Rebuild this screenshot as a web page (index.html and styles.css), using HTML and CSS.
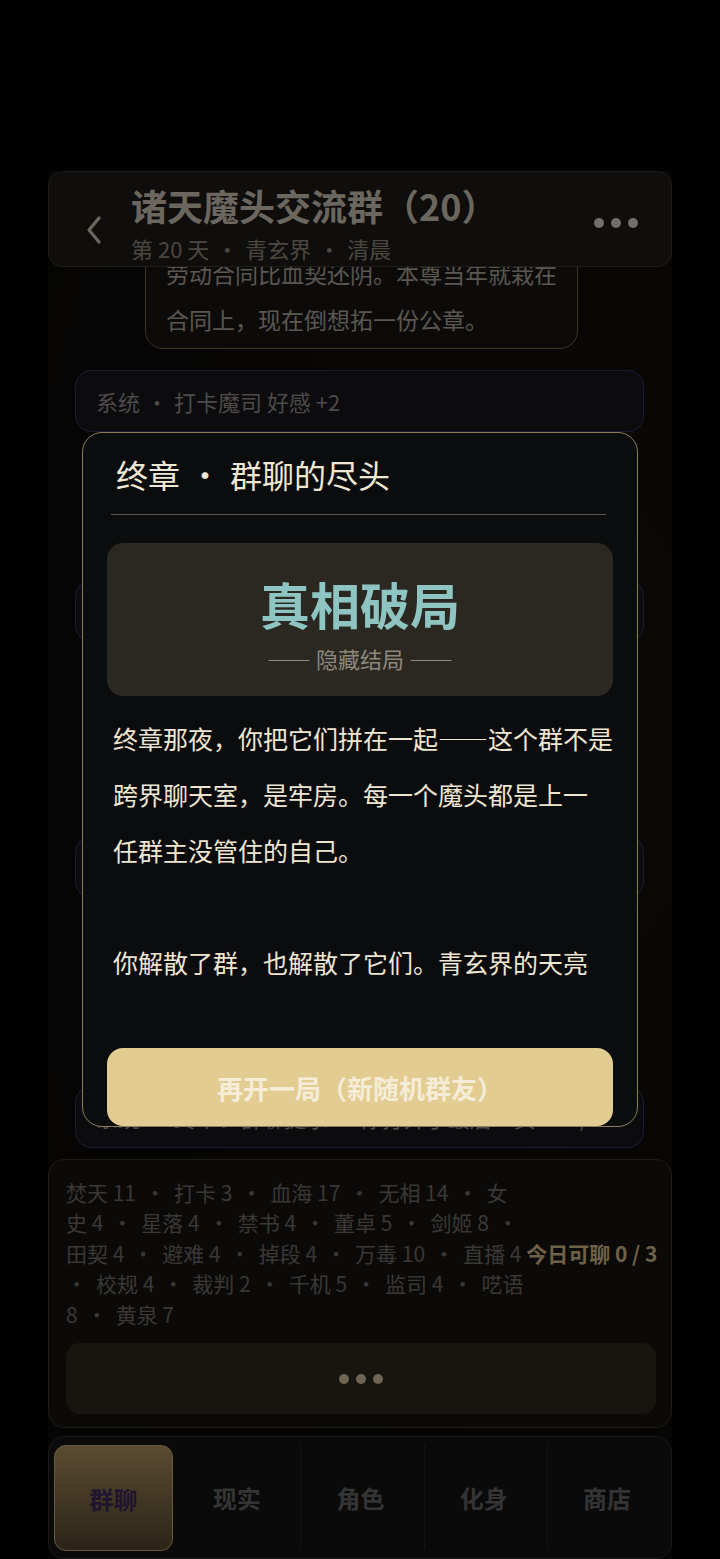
FILE: index.html
```html
<!DOCTYPE html>
<html lang="zh-CN">
<head>
    <meta charset="utf-8">
    <title>诸天魔头交流群</title>
    <link rel="stylesheet" href="styles.css">
</head>
<body>
    <div class="app">
        <header class="topbar">
            <button class="back" type="button">
                <svg width="18" height="32" viewBox="0 0 18 32"><polyline points="14,4 4,16 14,28" fill="none" stroke="currentColor" stroke-width="3.2" stroke-linecap="round" stroke-linejoin="round"/></svg>
            </button>
            <div class="titles">
                <div class="title">诸天魔头交流群（20）</div>
                <div class="sub">第 20 天<span class="sep">·</span>青玄界<span class="sep">·</span>清晨</div>
            </div>
            <div class="more"><i></i><i></i><i></i></div>
        </header>

        <main class="chat">
            <div class="chat-inner">
                <div class="bubble">你们这群里最吓人的不是魔功，是<br>劳动合同比血契还阴。本尊当年就栽在<br>合同上，现在倒想拓一份公章。</div>
                <div class="sys">系统<span class="sep">·</span>打卡魔司 好感 +2</div>
                <div class="bubble">群主今日可聊次数已用尽。<br>本座等你明日再来。</div>
                <div class="sys">系统<span class="sep">·</span>血海老祖 好感 +1</div>
                <div class="bubble">规矩是规矩。<br>可这群的规矩，是谁立的？<br>你想过没有。</div>
                <div class="sys">系统<span class="sep">·</span>监司 发现了一条线索</div>
                <div class="bubble">第二十天了。<br>该到头了。<br>群主，你还在吗？</div>
                <div class="sys tail">系统<span class="sep">·</span>终章：群聊提示 · 你打开了最后一页 · 7/8</div>
            </div>
        </main>

        <section class="status">
            <div class="roster">
                <div>焚天 11<span class="sep">·</span>打卡 3<span class="sep">·</span>血海 17<span class="sep">·</span>无相 14<span class="sep">·</span>女</div>
                <div>史 4<span class="sep">·</span>星落 4<span class="sep">·</span>禁书 4<span class="sep">·</span>董卓 5<span class="sep">·</span>剑姬 8<span class="sep">·</span></div>
                <div>田契 4<span class="sep">·</span>避难 4<span class="sep">·</span>掉段 4<span class="sep">·</span>万毒 10<span class="sep">·</span>直播 4 <b class="quota">今日可聊 0 / 3</b></div>
                <div><span class="sep lead">·</span>校规 4<span class="sep">·</span>裁判 2<span class="sep">·</span>千机 5<span class="sep">·</span>监司 4<span class="sep">·</span>呓语</div>
                <div>8<span class="sep">·</span>黄泉 7</div>
            </div>
            <div class="typing"><i></i><i></i><i></i></div>
        </section>

        <nav class="tabs">
            <a class="tab active">群聊</a>
            <a class="tab">现实</a>
            <a class="tab">角色</a>
            <a class="tab">化身</a>
            <a class="tab">商店</a>
        </nav>
    </div>

    <div class="mask"></div>

    <div class="modal">
        <h2 class="modal-head">终章<span class="sep">·</span>群聊的尽头</h2>
        <div class="hero">
            <div class="hero-name">真相破局</div>
            <div class="hero-tag">—— 隐藏结局 ——</div>
        </div>
        <div class="story">终章那夜，你把它们拼在一起——这个群不是
跨界聊天室，是牢房。每一个魔头都是上一
任群主没管住的自己。

你解散了群，也解散了它们。青玄界的天亮
了又暗。第 20 天 · 血契 60 · 邪念 0 · 分身 48
你看了一眼，群已不在。</div>
        <button class="again" type="button">再开一局（新随机群友）</button>
    </div>
</body>
</html>
```

FILE: styles.css
```css
body {
    margin: 0;
    background: #000;
    font-family: "Noto Sans CJK SC", "Noto Sans", sans-serif;
    overflow: hidden;
}

.sep {
    display: inline-block;
    text-align: center;
}

.app {
    width: 624px;
    height: 1388px;
    margin: 171px auto 0;
    display: flex;
    flex-direction: column;
    background: radial-gradient(ellipse at 80% 40%, #1a150d 0%, #0e0c0a 55%, #0a0908 100%);
}

/* top bar */
.topbar {
    height: 96px;
    box-sizing: border-box;
    display: flex;
    align-items: flex-start;
    padding: 11px 33px 0 36px;
    background: #1e1c1a;
    border: 1px solid #3e3a34;
    border-radius: 14px;
}

.back {
    background: none;
    border: none;
    padding: 0;
    margin-top: 31px;
    color: #d6ccbc;
    width: 18px;
    height: 32px;
}

.titles {
    margin-left: 28px;
    flex: 1;
}

.title {
    font-size: 36px;
    line-height: 44px;
    font-weight: 700;
    color: #d6ccbc;
}

.sub {
    margin-top: 7px;
    font-size: 22px;
    line-height: 28px;
    color: #968e80;
}

.sub .sep {
    width: 36px;
}

.more {
    display: flex;
    gap: 7px;
    margin-top: 35px;
}

.more i {
    width: 10px;
    height: 10px;
    border-radius: 50%;
    background: #e6ded0;
}

/* chat */
.chat {
    height: 885px;
    overflow: hidden;
}

.chat-inner {
    margin-top: -70px;
}

.bubble {
    width: 433px;
    box-sizing: border-box;
    margin-left: 97px;
    padding: 6px 20px 6px;
    font-size: 23px;
    line-height: 46px;
    color: #b4aca0;
    background: #181614;
    border: 1.5px solid #766a48;
    border-radius: 18px;
    margin-bottom: 21px;
}

.sys {
    margin: 0 28px 21px 27px;
    height: 62px;
    box-sizing: border-box;
    padding-left: 20px;
    font-size: 22px;
    line-height: 60px;
    color: #9a948e;
    background: #18161c;
    border: 1px solid #3a3666;
    border-radius: 16px;
    white-space: nowrap;
    overflow: hidden;
}

.sys .sep {
    width: 34px;
}

.sys.tail {
    margin-top: -6px;
}

/* roster + typing */
.status {
    margin-top: 10px;
    padding: 17px 15px 13px 17px;
    background: #161412;
    border: 1px solid #3e3830;
    border-radius: 16px;
}

.roster {
    font-size: 21px;
    line-height: 30.5px;
    color: #74706a;
    white-space: nowrap;
}

.roster .sep {
    width: 38px;
}

.roster .lead {
    width: 30px;
    text-align: right;
    padding-right: 10px;
    box-sizing: border-box;
}

.quota {
    color: #dcc290;
}

.typing {
    margin-top: 14px;
    height: 71px;
    border-radius: 14px;
    background: #2e2a1e;
    display: flex;
    justify-content: center;
    align-items: center;
    gap: 7px;
}

.typing i {
    width: 10px;
    height: 10px;
    border-radius: 50%;
    background: #dccaa4;
}

/* tabs */
.tabs {
    margin-top: 8px;
    padding: 8px 5px 7px;
    display: grid;
    grid-template-columns: repeat(5, 1fr);
    gap: 4px;
    background: #141414;
    border: 1px solid #343434;
    border-radius: 16px;
}

.tab {
    height: 104px;
    display: flex;
    align-items: center;
    justify-content: center;
    font-size: 24px;
    font-weight: 700;
    color: #686868;
    border-left: 1px solid #282828;
}

.tab:nth-child(2) {
    border-left: none;
}

.tab.active {
    border: 1.5px solid #d4b478;
    border-radius: 12px;
    background: linear-gradient(#b69862, #564830);
    color: #3e2a60;
}

/* modal */
.mask {
    position: fixed;
    inset: 0;
    background: rgba(0, 0, 0, 0.5);
}

.modal {
    position: fixed;
    left: 82px;
    top: 432px;
    width: 556px;
    height: 695px;
    box-sizing: border-box;
    display: flex;
    flex-direction: column;
    background: #0b0c0e;
    border: 1.5px solid #8b7d5e;
    border-radius: 20px;
}

.modal-head {
    margin: 0 31px 0 28px;
    padding: 21px 0 20px 5px;
    border-bottom: 1.5px solid #5c574a;
    font-size: 32px;
    line-height: 40px;
    font-weight: 400;
    color: #efe7d5;
}

.modal-head .sep {
    width: 50px;
}

.hero {
    margin: 28px 24px 0;
    height: 153px;
    box-sizing: border-box;
    padding-top: 30px;
    border-radius: 16px;
    background: #2b2822;
    text-align: center;
}

.hero-name {
    font-size: 50px;
    line-height: 60px;
    font-weight: 700;
    color: #8ec5c2;
}

.hero-tag {
    margin-top: 11px;
    font-size: 22px;
    line-height: 28px;
    color: #8e887a;
}

/* scrolled ending text, only the first lines fit above the button */
.story {
    height: 286px;
    margin: 14px 0 0 30px;
    width: 510px;
    overflow: hidden;
    white-space: pre;
    font-size: 25px;
    line-height: 56px;
    color: #efe6d2;
}

.again {
    margin: auto 24px 0;
    height: 78px;
    border: none;
    border-radius: 16px;
    background: #e3cc92;
    color: #f5edd8;
    font-family: inherit;
    font-size: 26px;
    font-weight: 700;
}
```
